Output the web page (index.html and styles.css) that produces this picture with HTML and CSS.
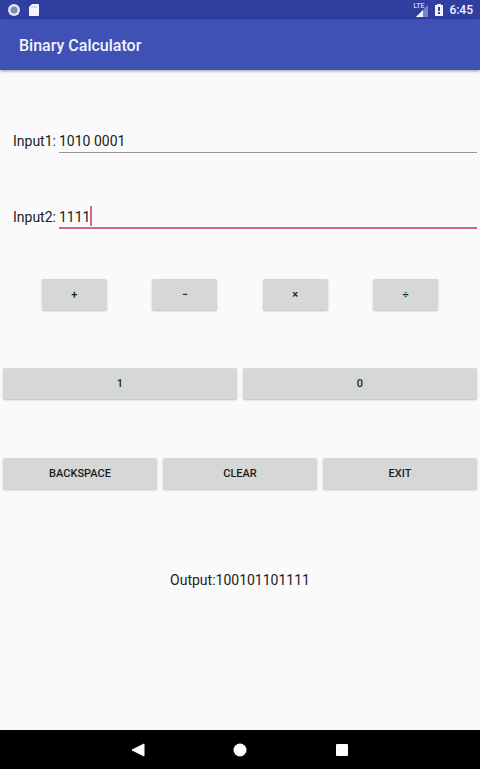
FILE: index.html
```html
<!DOCTYPE html>
<html lang="en">
<head>
    <meta charset="UTF-8">
    <meta name="viewport" content="width=device-width, initial-scale=1.0">
    <title>Binary Calculator</title>
    <link rel="stylesheet" href="styles.css">
</head>
<body>
    <!-- Status bar -->
    <div class="status-bar">
        <div class="status-group">
            <svg width="14" height="14" viewBox="0 0 14 14" aria-hidden="true">
                <circle cx="7" cy="7" r="6" fill="#dfe5fb"/>
                <circle cx="7" cy="7" r="3.500" fill="#7f88a8"/>
            </svg>
            <svg width="14" height="14" viewBox="0 0 14 14" aria-hidden="true">
                <path d="M5 1h6a1 1 0 0 1 1 1v10a1 1 0 0 1-1 1H3a1 1 0 0 1-1-1V4z" fill="#f2f4ff"/>
                <path d="M5 3v2M7 3v2M9 3v2" stroke="#b4bbe2" stroke-width="1"/>
            </svg>
        </div>
        <div class="status-group">
            <span class="network">
                <span class="lte">LTE</span>
                <svg width="16" height="14" viewBox="0 0 16 14" aria-hidden="true">
                    <path d="M15 2v12H3z" fill="#7683cb"/>
                    <path d="M10 7v7H3z" fill="#f2f4ff"/>
                </svg>
            </span>
            <svg width="8" height="14" viewBox="0 0 8 14" aria-hidden="true">
                <path d="M2 1h4v1h2v11H0V2h2z" fill="#f2f4ff"/>
                <path d="M3 4h2v4H3zM3 9h2v2H3z" fill="#303f9f"/>
            </svg>
            <span class="clock">6:45</span>
        </div>
    </div>

    <header class="app-bar">
        <h1>Binary Calculator</h1>
    </header>

    <main class="content">
        <!-- Inputs -->
        <form class="inputs">
            <div class="field">
                <label for="input1">Input1:</label>
                <div class="field-box">
                    <input type="text" id="input1" value="1010 0001">
                </div>
            </div>
            <div class="field active">
                <label for="input2">Input2:</label>
                <div class="field-box">
                    <input type="text" id="input2" value="1111">
                    <span class="cursor"></span>
                </div>
            </div>
        </form>

        <!-- Buttons -->
        <div class="operators">
            <button type="button">+</button>
            <button type="button">−</button>
            <button type="button">×</button>
            <button type="button">÷</button>
        </div>
        <div class="button-row">
            <button type="button">1</button>
            <button type="button">0</button>
        </div>
        <div class="button-row">
            <button type="button">BACKSPACE</button>
            <button type="button">CLEAR</button>
            <button type="button">EXIT</button>
        </div>

        <output class="result" for="input1 input2">Output:100101101111</output>
    </main>

    <nav class="nav-bar">
        <button type="button" aria-label="Back">
            <svg width="14" height="14" viewBox="0 0 14 14"><path d="M13 1v12L1 7z" fill="#fff" stroke="#fff" stroke-width="1" stroke-linejoin="round"/></svg>
        </button>
        <button type="button" aria-label="Home">
            <svg width="14" height="14" viewBox="0 0 14 14"><circle cx="7" cy="7" r="6.500" fill="#fff"/></svg>
        </button>
        <button type="button" aria-label="Recent apps">
            <svg width="14" height="14" viewBox="0 0 14 14"><rect x="1" y="1" width="12" height="12" rx="1" fill="#fff"/></svg>
        </button>
    </nav>
</body>
</html>
```

FILE: styles.css
```css
* {
    box-sizing: border-box;
}
body {
    display: flex;
    flex-direction: column;
    min-height: 100vh;
    margin: 0;
    background-color: #fafafa;
    color: #1c1c1c;
    font-family: Roboto, "Liberation Sans", sans-serif;
    font-size: 14px;
}
svg {
    display: block;
}
.status-bar {
    display: flex;
    justify-content: space-between;
    align-items: center;
    height: 19px;
    padding: 0 7px;
    background-color: #303f9f;
    color: #f2f4ff;
}
.status-group {
    display: flex;
    align-items: center;
    gap: 6px;
}
.network {
    position: relative;
}
.lte {
    position: absolute;
    top: 0;
    left: 0;
    font-size: 7px;
    line-height: 7px;
}
.clock {
    font-size: 12px;
    font-weight: 500;
    line-height: 20px;
}
.app-bar {
    display: flex;
    align-items: center;
    height: 51px;
    padding: 2px 19px 0;
    background-color: #3f51b5;
    box-shadow: 0 1px 3px rgba(0, 0, 0, 0.4);
}
h1 {
    margin: 0;
    color: #f2f4ff;
    font-size: 16px;
    font-weight: 500;
}
.content {
    flex: 1;
    padding-top: 56px;
}
.inputs {
    display: flex;
    flex-direction: column;
    gap: 49px;
    margin-bottom: 50px;
}
.field {
    display: flex;
    align-items: center;
    padding: 0 3px 0 13px;
}
.field label {
    padding-top: 2px;
}
.field-box {
    position: relative;
    flex: 1;
    margin-left: 3px;
}
input {
    display: block;
    width: 100%;
    height: 27px;
    padding: 4px 0 0;
    border: 0;
    border-bottom: 1px solid #9a9a9a;
    background: none;
    color: inherit;
    font: inherit;
    outline: none;
}
.active input {
    border-bottom: 2px solid #d9618a;
}
.cursor {
    position: absolute;
    top: 4px;
    left: 31px;
    width: 2px;
    height: 20px;
    background-color: #d9618a;
}
button {
    height: 31px;
    padding: 0;
    border: 0;
    border-radius: 2px;
    background-color: #d6d7d7;
    box-shadow: 0 1px 2px rgba(0, 0, 0, 0.25);
    color: #1c1c1c;
    font-family: inherit;
    font-size: 11px;
    font-weight: 500;
    cursor: pointer;
}
.operators {
    display: grid;
    grid-template-columns: repeat(4, 1fr);
    justify-items: center;
    margin-bottom: 58px;
    padding: 0 19px;
}
.operators button {
    width: 65px;
}
.button-row {
    display: flex;
    gap: 6px;
    margin-bottom: 59px;
    padding: 0 3px;
}
.button-row button {
    flex: 1;
}
.result {
    display: block;
    margin-top: 81px;
    line-height: 20px;
    text-align: center;
}
.nav-bar {
    display: flex;
    justify-content: center;
    align-items: center;
    gap: 88px;
    height: 39px;
    background-color: #000;
}
.nav-bar button {
    height: 14px;
    background: none;
    box-shadow: none;
}
```
